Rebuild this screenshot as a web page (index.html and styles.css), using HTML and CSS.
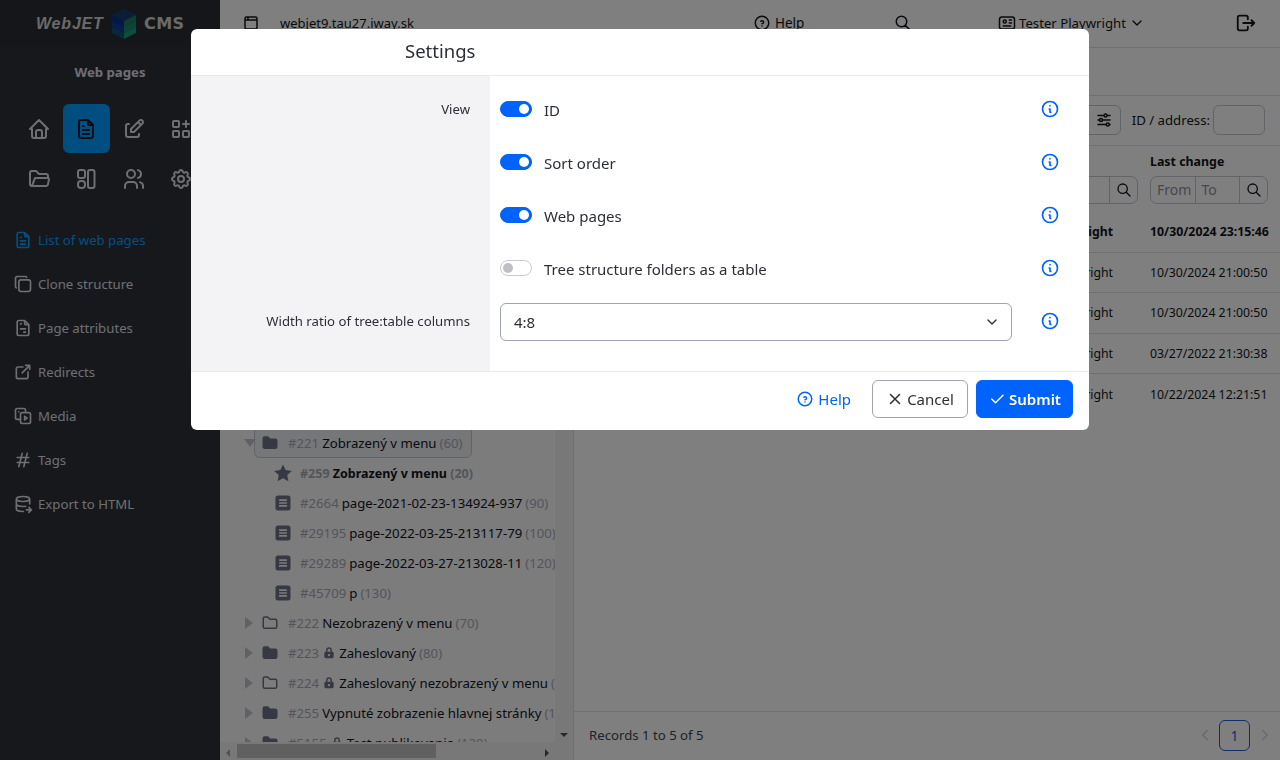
FILE: index.html
```html
<!DOCTYPE html>
<html lang="en">
<head>
<meta charset="utf-8">
<title>WebJET CMS - Web pages</title>
<link rel="stylesheet" href="styles.css">
</head>
<body>
<svg class="defs" xmlns="http://www.w3.org/2000/svg">
<symbol id="i-home" viewBox="0 0 24 24"><path d="M5 12H3l9-9 9 9h-2M5 12v7a2 2 0 0 0 2 2h10a2 2 0 0 0 2-2v-7M9 21v-6a2 2 0 0 1 2-2h2a2 2 0 0 1 2 2v6"/></symbol>
<symbol id="i-file" viewBox="0 0 24 24"><path d="M14 3v4a1 1 0 0 0 1 1h4M17 21H7a2 2 0 0 1-2-2V5a2 2 0 0 1 2-2h7l5 5v11a2 2 0 0 1-2 2zM9 9h1M9 13h6M9 17h6"/></symbol>
<symbol id="i-edit" viewBox="0 0 24 24"><path d="M7 7H6a2 2 0 0 0-2 2v9a2 2 0 0 0 2 2h9a2 2 0 0 0 2-2v-1M20.385 6.585a2.1 2.1 0 0 0-2.97-2.97L9 12v3h3l8.385-8.415zM16 5l3 3"/></symbol>
<symbol id="i-apps" viewBox="0 0 24 24"><path d="M5 4h4a1 1 0 0 1 1 1v4a1 1 0 0 1-1 1H5a1 1 0 0 1-1-1V5a1 1 0 0 1 1-1zM5 14h4a1 1 0 0 1 1 1v4a1 1 0 0 1-1 1H5a1 1 0 0 1-1-1v-4a1 1 0 0 1 1-1zM15 14h4a1 1 0 0 1 1 1v4a1 1 0 0 1-1 1h-4a1 1 0 0 1-1-1v-4a1 1 0 0 1 1-1zM14 7h6M17 4v6"/></symbol>
<symbol id="i-folder-open" viewBox="0 0 24 24"><path d="M5 19l2.757-7.351A1 1 0 0 1 8.693 11H21a1 1 0 0 1 .986 1.164l-.996 5.211A2 2 0 0 1 19.026 19H5a2 2 0 0 1-2-2V6a2 2 0 0 1 2-2h4l3 3h7a2 2 0 0 1 2 2v2"/></symbol>
<symbol id="i-layout" viewBox="0 0 24 24"><rect x="4" y="3" width="7" height="8" rx="2"/><rect x="4" y="14" width="7" height="7" rx="3"/><rect x="14" y="3" width="6.500" height="18" rx="2"/></symbol>
<symbol id="i-users" viewBox="0 0 24 24"><path d="M5 7a4 4 0 1 0 8 0 4 4 0 1 0-8 0M3 21v-2a4 4 0 0 1 4-4h4a4 4 0 0 1 4 4v2M16 3.130a4 4 0 0 1 0 7.750M21 21v-2a4 4 0 0 0-3-3.850"/></symbol>
<symbol id="i-gear" viewBox="0 0 24 24"><path d="M10.325 4.317c.426-1.756 2.924-1.756 3.350 0a1.724 1.724 0 0 0 2.573 1.066c1.543-.94 3.310.826 2.370 2.370a1.724 1.724 0 0 0 1.065 2.572c1.756.426 1.756 2.924 0 3.350a1.724 1.724 0 0 0-1.066 2.573c.94 1.543-.826 3.310-2.370 2.370a1.724 1.724 0 0 0-2.572 1.065c-.426 1.756-2.924 1.756-3.350 0a1.724 1.724 0 0 0-2.573-1.066c-1.543.94-3.310-.826-2.370-2.370a1.724 1.724 0 0 0-1.065-2.572c-1.756-.426-1.756-2.924 0-3.350a1.724 1.724 0 0 0 1.066-2.573c-.94-1.543.826-3.310 2.370-2.370 1 .608 2.296.07 2.572-1.065zM9 12a3 3 0 1 0 6 0 3 3 0 0 0-6 0"/></symbol>
<symbol id="i-copy" viewBox="0 0 24 24"><path d="M9.667 7h8.666A2.667 2.667 0 0 1 21 9.667v8.666A2.667 2.667 0 0 1 18.333 21H9.667A2.667 2.667 0 0 1 7 18.333V9.667A2.667 2.667 0 0 1 9.667 7zM4.012 16.737A2.005 2.005 0 0 1 3 15V5c0-1.100.9-2 2-2h10c.75 0 1.158.385 1.500 1"/></symbol>
<symbol id="i-attr" viewBox="0 0 24 24"><path d="M14 3v4a1 1 0 0 0 1 1h4M17 21H7a2 2 0 0 1-2-2V5a2 2 0 0 1 2-2h7l5 5v11a2 2 0 0 1-2 2zM9 7h1M9 13h6M13 17h2"/></symbol>
<symbol id="i-ext" viewBox="0 0 24 24"><path d="M12 6H6a2 2 0 0 0-2 2v10a2 2 0 0 0 2 2h10a2 2 0 0 0 2-2v-6M11 13l9-9M15 4h5v5"/></symbol>
<symbol id="i-media" viewBox="0 0 24 24"><path d="M11 8h8a2 2 0 0 1 2 2v9a2 2 0 0 1-2 2h-8a2 2 0 0 1-2-2v-9a2 2 0 0 1 2-2zM9 16H5a2 2 0 0 1-2-2V5a2 2 0 0 1 2-2h8a2 2 0 0 1 2 2v3M7 7h.01M14 12.500l3 2-3 2z"/></symbol>
<symbol id="i-hash" viewBox="0 0 24 24"><path d="M5 9h14M5 15h14M11 4L7 20M17 4l-4 16"/></symbol>
<symbol id="i-db" viewBox="0 0 24 24"><path d="M4 6c0 1.657 3.582 3 8 3s8-1.343 8-3-3.582-3-8-3-8 1.343-8 3M4 6v6c0 1.657 3.582 3 8 3 1.118 0 2.183-.086 3.150-.241M20 12V6M4 12v6c0 1.657 3.582 3 8 3 .157 0 .312-.002.466-.005M16 19h6M19 16l3 3-3 3"/></symbol>
<symbol id="i-info" viewBox="0 0 24 24"><path d="M3 12a9 9 0 1 0 18 0 9 9 0 1 0-18 0M12 8h.01M11 12h1v4h1"/></symbol>
<symbol id="i-help" viewBox="0 0 24 24"><path d="M3 12a9 9 0 1 0 18 0 9 9 0 1 0-18 0M12 16v.01M12 13a2 2 0 0 0 .914-3.782 1.980 1.980 0 0 0-2.414.483"/></symbol>
<symbol id="i-search" viewBox="0 0 24 24"><path d="M3 10a7 7 0 1 0 14 0 7 7 0 1 0-14 0M21 21l-6-6"/></symbol>
<symbol id="i-id" viewBox="0 0 24 24"><path d="M5 4h14a3 3 0 0 1 3 3v10a3 3 0 0 1-3 3H5a3 3 0 0 1-3-3V7a3 3 0 0 1 3-3zM7 10a2 2 0 1 0 4 0 2 2 0 1 0-4 0M15 8h3M15 12h3M7 16h10"/></symbol>
<symbol id="i-logout" viewBox="0 0 24 24"><path d="M14 8V6a2 2 0 0 0-2-2H5a2 2 0 0 0-2 2v12a2 2 0 0 0 2 2h7a2 2 0 0 0 2-2v-2M9 12h12l-3-3M18 15l3-3"/></symbol>
<symbol id="i-window" viewBox="0 0 24 24"><path d="M6 4h12a2 2 0 0 1 2 2v12a2 2 0 0 1-2 2H6a2 2 0 0 1-2-2V6a2 2 0 0 1 2-2zM4 8h16M8 4v4"/></symbol>
<symbol id="i-sliders" viewBox="0 0 24 24"><path d="M12 6a2 2 0 1 0 4 0 2 2 0 1 0-4 0M4 6h8M16 6h4M6 12a2 2 0 1 0 4 0 2 2 0 1 0-4 0M4 12h2M10 12h10M15 18a2 2 0 1 0 4 0 2 2 0 1 0-4 0M4 18h11M19 18h1"/></symbol>
<symbol id="i-check" viewBox="0 0 24 24"><path d="M5 12l5 5L20 7"/></symbol>
<symbol id="i-x" viewBox="0 0 24 24"><path d="M18 6L6 18M6 6l12 12"/></symbol>
<symbol id="i-chev" viewBox="0 0 24 24"><path d="M6 9l6 6 6-6"/></symbol>
<symbol id="i-left" viewBox="0 0 24 24"><path d="M15 6l-6 6 6 6"/></symbol>
<symbol id="i-right" viewBox="0 0 24 24"><path d="M9 6l6 6-6 6"/></symbol>
<symbol id="f-folder" viewBox="0 0 24 24"><path class="fill" d="M9 3a1 1 0 0 1 .608.206l.1.087L12.414 6H19a3 3 0 0 1 3 3v8a3 3 0 0 1-3 3H5a3 3 0 0 1-3-3V6a3 3 0 0 1 3-3z"/></symbol>
<symbol id="o-folder" viewBox="0 0 24 24"><path d="M5 4h4l3 3h7a2 2 0 0 1 2 2v8a2 2 0 0 1-2 2H5a2 2 0 0 1-2-2V6a2 2 0 0 1 2-2"/></symbol>
<symbol id="f-star" viewBox="0 0 24 24"><path class="fill" d="M12 1.800l3.150 6.700 7.350.95-5.400 5.050 1.400 7.300L12 18.200l-6.500 3.600 1.400-7.300L1.500 9.450l7.350-.95z"/></symbol>
<symbol id="f-page" viewBox="0 0 24 24"><path class="fill" fill-rule="evenodd" d="M6 3h12a3 3 0 0 1 3 3v12a3 3 0 0 1-3 3H6a3 3 0 0 1-3-3V6a3 3 0 0 1 3-3zM8 7.500a1 1 0 0 0 0 2h8a1 1 0 0 0 0-2zM8 11a1 1 0 0 0 0 2h8a1 1 0 0 0 0-2zM8 14.500a1 1 0 0 0 0 2h8a1 1 0 0 0 0-2z"/></symbol>
<symbol id="f-lock" viewBox="0 0 24 24"><path class="fill" fill-rule="evenodd" d="M12 2a5 5 0 0 1 5 5v3h.5a2.500 2.500 0 0 1 2.500 2.500v6a2.500 2.500 0 0 1-2.500 2.500h-11A2.500 2.500 0 0 1 4 18.500v-6A2.500 2.500 0 0 1 6.500 10H7V7a5 5 0 0 1 5-5zm0 2.500A2.500 2.500 0 0 0 9.500 7v3h5V7A2.500 2.500 0 0 0 12 4.500zM12 13.500a2 2 0 1 0 0 4 2 2 0 0 0 0-4z"/></symbol>
</svg>

<div class="app">
  <aside class="sidebar">
    <div class="logo">
      <span class="logo-web">WebJET</span>
      <svg class="logo-mark" viewBox="0 0 24 30"><polygon points="12,0 24,6 12,12 0,6" fill="#123f6e"/><polygon points="0,6 12,12 12,18 0,12" fill="#0a2f8f"/><polygon points="24,6 12,12 12,18 24,12" fill="#1a7f6a"/><polygon points="0,12 12,18 12,24 0,18" fill="#0b3f94"/><polygon points="24,12 12,18 12,24 24,18" fill="#178a68"/><polygon points="0,18 12,24 12,30 0,24" fill="#10507c"/><polygon points="24,18 12,24 12,30 24,24" fill="#1c9a6e"/></svg>
      <span class="logo-cms">CMS</span>
    </div>
    <div class="section-title">Web pages</div>
    <div class="module-grid">
      <a class="module"><svg class="ic24"><use href="#i-home"/></svg></a>
      <a class="module module-active"><svg class="ic24"><use href="#i-file"/></svg></a>
      <a class="module"><svg class="ic24"><use href="#i-edit"/></svg></a>
      <a class="module"><svg class="ic24"><use href="#i-apps"/></svg></a>
      <a class="module"><svg class="ic24"><use href="#i-folder-open"/></svg></a>
      <a class="module"><svg class="ic24"><use href="#i-layout"/></svg></a>
      <a class="module"><svg class="ic24"><use href="#i-users"/></svg></a>
      <a class="module"><svg class="ic24"><use href="#i-gear"/></svg></a>
    </div>
    <nav class="side-nav">
      <a class="nav-item nav-active"><svg class="ic20"><use href="#i-file"/></svg>List of web pages</a>
      <a class="nav-item"><svg class="ic20"><use href="#i-copy"/></svg>Clone structure</a>
      <a class="nav-item"><svg class="ic20"><use href="#i-attr"/></svg>Page attributes</a>
      <a class="nav-item"><svg class="ic20"><use href="#i-ext"/></svg>Redirects</a>
      <a class="nav-item"><svg class="ic20"><use href="#i-media"/></svg>Media</a>
      <a class="nav-item"><svg class="ic20"><use href="#i-hash"/></svg>Tags</a>
      <a class="nav-item"><svg class="ic20"><use href="#i-db"/></svg>Export to HTML</a>
    </nav>
  </aside>

  <div class="main">
    <header class="topbar">
      <svg class="ic18 domain-ic"><use href="#i-window"/></svg>
      <span class="domain">webjet9.tau27.iway.sk</span>
      <span class="top-help"><svg class="ic18"><use href="#i-help"/></svg>Help</span>
      <svg class="ic18 top-search"><use href="#i-search"/></svg>
      <span class="top-user"><svg class="ic18"><use href="#i-id"/></svg>Tester Playwright<svg class="ic16"><use href="#i-chev"/></svg></span>
      <svg class="ic22 top-logout"><use href="#i-logout"/></svg>
    </header>
    <div class="tabsbar"></div>
    <div class="workspace">
      <section class="tree">
        <div class="tree-scroll">
          <div class="tree-row tree-sel"><span class="caret caret-down"></span><svg class="ic18"><use href="#f-folder"/></svg><span class="tid">#221</span> Zobrazený v menu <span class="tnum">(60)</span></div>
          <div class="tree-row leaf"><svg class="ic20"><use href="#f-star"/></svg><strong><span class="tid">#259</span> Zobrazený v menu <span class="tnum">(20)</span></strong></div>
          <div class="tree-row leaf"><svg class="ic20"><use href="#f-page"/></svg><span class="tid">#2664</span> page-2021-02-23-134924-937 <span class="tnum">(90)</span></div>
          <div class="tree-row leaf"><svg class="ic20"><use href="#f-page"/></svg><span class="tid">#29195</span> page-2022-03-25-213117-79 <span class="tnum">(100)</span></div>
          <div class="tree-row leaf"><svg class="ic20"><use href="#f-page"/></svg><span class="tid">#29289</span> page-2022-03-27-213028-11 <span class="tnum">(120)</span></div>
          <div class="tree-row leaf"><svg class="ic20"><use href="#f-page"/></svg><span class="tid">#45709</span> p <span class="tnum">(130)</span></div>
          <div class="tree-row"><span class="caret"></span><svg class="ic18"><use href="#o-folder"/></svg><span class="tid">#222</span> Nezobrazený v menu <span class="tnum">(70)</span></div>
          <div class="tree-row"><span class="caret"></span><svg class="ic18"><use href="#f-folder"/></svg><span class="tid">#223</span> <svg class="ic14 lock"><use href="#f-lock"/></svg> Zaheslovaný <span class="tnum">(80)</span></div>
          <div class="tree-row"><span class="caret"></span><svg class="ic18"><use href="#o-folder"/></svg><span class="tid">#224</span> <svg class="ic14 lock"><use href="#f-lock"/></svg> Zaheslovaný nezobrazený v menu <span class="tnum">(110)</span></div>
          <div class="tree-row"><span class="caret"></span><svg class="ic18"><use href="#f-folder"/></svg><span class="tid">#255</span> Vypnuté zobrazenie hlavnej stránky <span class="tnum">(100)</span></div>
          <div class="tree-row"><span class="caret"></span><svg class="ic18"><use href="#f-folder"/></svg><span class="tid">#5155</span> <svg class="ic14 lock"><use href="#f-lock"/></svg> Test publikovania <span class="tnum">(120)</span></div>
        </div>
        <div class="sb-v"><span class="sb-down"></span></div>
        <div class="sb-h"><span class="sb-left"></span><span class="sb-thumb"></span><span class="sb-right"></span></div>
      </section>
      <section class="datatable">
        <div class="dt-toolbar">
          <button class="tool-btn"><svg class="ic18"><use href="#i-sliders"/></svg></button>
          <label class="id-label">ID / address:</label>
          <span class="id-input"></span>
        </div>
        <div class="dt-grid">
          <div class="dt-head">
            <div class="col-a"><b>Changed by</b><div class="filter filter-a"><span class="f-cell f-grow"></span><span class="f-btn"><svg class="ic16"><use href="#i-search"/></svg></span></div></div>
            <div class="col-b"><b>Last change</b><div class="filter"><span class="f-cell">From</span><span class="f-cell">To</span><span class="f-btn"><svg class="ic16"><use href="#i-search"/></svg></span></div></div>
          </div>
          <div class="dt-row dt-row-bold"><span class="col-a">Tester Playwright</span><span class="col-b">10/30/2024 23:15:46</span></div>
          <div class="dt-row"><span class="col-a">Tester Playwright</span><span class="col-b">10/30/2024 21:00:50</span></div>
          <div class="dt-row"><span class="col-a">Tester Playwright</span><span class="col-b">10/30/2024 21:00:50</span></div>
          <div class="dt-row"><span class="col-a">Tester Playwright</span><span class="col-b">03/27/2022 21:30:38</span></div>
          <div class="dt-row dt-row-last"><span class="col-a">Tester Playwright</span><span class="col-b">10/22/2024 12:21:51</span></div>
        </div>
        <footer class="dt-footer">
          <span class="records">Records 1 to 5 of 5</span>
          <div class="pager"><svg class="ic18 pg-arrow"><use href="#i-left"/></svg><span class="pg-num">1</span><svg class="ic18 pg-arrow"><use href="#i-right"/></svg></div>
        </footer>
      </section>
    </div>
  </div>
</div>

<div class="backdrop"></div>
<div class="modal">
  <div class="modal-head">Settings</div>
  <div class="modal-body">
    <div class="form-row">
      <div class="form-label">View</div>
      <div class="form-field"><span class="switch on"></span><span>ID</span></div>
      <svg class="ic20 info"><use href="#i-info"/></svg>
    </div>
    <div class="form-row">
      <div class="form-label"></div>
      <div class="form-field"><span class="switch on"></span><span>Sort order</span></div>
      <svg class="ic20 info"><use href="#i-info"/></svg>
    </div>
    <div class="form-row">
      <div class="form-label"></div>
      <div class="form-field"><span class="switch on"></span><span>Web pages</span></div>
      <svg class="ic20 info"><use href="#i-info"/></svg>
    </div>
    <div class="form-row">
      <div class="form-label"></div>
      <div class="form-field"><span class="switch"></span><span>Tree structure folders as a table</span></div>
      <svg class="ic20 info"><use href="#i-info"/></svg>
    </div>
    <div class="form-row">
      <div class="form-label">Width ratio of tree:table columns</div>
      <div class="form-field"><div class="select"><span>4:8</span><svg class="ic16"><use href="#i-chev"/></svg></div></div>
      <svg class="ic20 info"><use href="#i-info"/></svg>
    </div>
  </div>
  <div class="modal-foot">
    <a class="help-link"><svg class="ic18"><use href="#i-help"/></svg>Help</a>
    <button class="btn btn-cancel"><svg class="ic18"><use href="#i-x"/></svg>Cancel</button>
    <button class="btn btn-submit"><svg class="ic18"><use href="#i-check"/></svg>Submit</button>
  </div>
</div>
</body>
</html>
```

FILE: styles.css
```css
* { box-sizing: border-box; }
html, body { margin: 0; height: 100%; overflow: hidden; }
body { font-family: "Noto Sans", "Open Sans", sans-serif; font-size: 13.2px; color: #13151b; background: #fff; }
.defs { display: none; }
svg { fill: none; stroke: currentColor; stroke-width: 2; stroke-linecap: round; stroke-linejoin: round; flex: none; }
.fill { fill: currentColor; stroke: none; }
.ic14 { width: 14px; height: 14px; }
.ic16 { width: 16px; height: 16px; }
.ic18 { width: 18px; height: 18px; }
.ic20 { width: 20px; height: 20px; }
.ic22 { width: 22px; height: 22px; }
.ic24 { width: 24px; height: 24px; }

.app { display: flex; height: 760px; }

/* sidebar */
.sidebar { width: 220px; flex: none; background: #2f3139; color: #dcdee6; overflow: hidden; }
.logo { height: 47px; background: #2b2d35; display: flex; align-items: center; padding-left: 36px; }
.logo-web { font: italic 700 16px "Liberation Sans", sans-serif; letter-spacing: .8px; width: 76px; color: #d4d4d4; }
.logo-mark { width: 24px; height: 30px; stroke: none; }
.logo-cms { font: 700 16px "DejaVu Sans", sans-serif; letter-spacing: .4px; margin-left: 8px; color: #d4d4d4; }
.section-title { text-align: center; font-weight: 700; padding-top: 16px; height: 57px; }
.module-grid { display: grid; grid-template-columns: repeat(4, 47.5px); grid-auto-rows: 49px; row-gap: 1px; padding-left: 15px; width: 230px; }
.module { display: flex; align-items: center; justify-content: center; border-radius: 6px; }
.module-active { background: #009bff; color: #0a1c2e; }
.side-nav { margin-top: 15px; display: flex; flex-direction: column; }
.nav-item { display: flex; align-items: center; gap: 5px; height: 44px; padding-left: 13px; }
.nav-active { color: #0a9eff; }

/* main */
.main { flex: 1; min-width: 0; display: flex; flex-direction: column; }
.topbar { height: 48px; flex: none; display: flex; align-items: center; padding: 0 0 1px 22px; border-bottom: 1px solid #dfe1e6; font-size: 13.2px; }
.domain { margin-left: 20px; width: 473px; font-size: 13px; }
.top-help { display: flex; align-items: center; gap: 4px; width: 140.500px; font-size: 13.500px; }
.top-search { margin-right: 86.500px; }
.top-user { display: flex; align-items: center; gap: 3px; width: 237px; }
.workspace { flex: 1; display: flex; min-height: 0; }
.tabsbar { height: 48px; flex: none; border-bottom: 1px solid #dfe1e6; }

/* tree */
.tree { width: 354px; flex: none; position: relative; overflow: hidden; background: #f8f8fa; border-right: 1px solid #dfe1e6; }
.tree-scroll { padding: 332px 0 0 24px; width: 335px; white-space: nowrap; overflow: hidden; }
.tree-row { height: 30px; display: flex; align-items: center; gap: 3px; position: relative; padding-left: 17px; isolation: isolate; }
.tree-row .ic18 { margin-right: 6px; color: #6c7189; }
.tree-row .tid, .tree-row .tnum { color: #a8aab4; }
.tree-row strong { font-size: 12.500px; }
.tree-sel::before { content: ""; position: absolute; left: 10px; top: -2px; width: 216px; height: 30px; border: 1px solid #c4c6d0; border-radius: 6px; background: #eceef2; z-index: -1; }
.leaf { padding-left: 29px; }
.leaf .ic20 { color: #6c7189; margin-right: 4px; }
.lock { color: #6c7189; }
.caret { position: absolute; left: 1px; top: 9px; width: 0; height: 0; border-left: 8px solid #c0c2cc; border-top: 6px solid transparent; border-bottom: 6px solid transparent; }
.caret-down { left: 0; top: 11px; border-left: 6px solid transparent; border-right: 6px solid transparent; border-top: 8px solid #c0c2cc; border-bottom: 0; }
.sb-v { position: absolute; right: 0; top: 0; bottom: 18px; width: 18px; background: #f1f1f1; }
.sb-down { position: absolute; left: 5px; bottom: 5px; border-left: 4px solid transparent; border-right: 4px solid transparent; border-top: 4px solid #505050; }
.sb-h { position: absolute; left: 0; right: 0; bottom: 0; height: 18px; background: #f1f1f1; }
.sb-left { position: absolute; left: 6px; top: 7px; border-top: 4px solid transparent; border-bottom: 4px solid transparent; border-right: 4px solid #a3a3a3; }
.sb-thumb { position: absolute; left: 17px; top: 2px; width: 199px; height: 14px; background: #c1c1c1; }
.sb-right { position: absolute; left: 325px; top: 7px; border-top: 4px solid transparent; border-bottom: 4px solid transparent; border-left: 4px solid #505050; }

/* table */
.datatable { flex: 1; min-width: 0; display: flex; flex-direction: column; }
.dt-toolbar { height: 49px; flex: none; display: flex; align-items: center; justify-content: flex-end; padding: 0 15px 2px 0; }
.tool-btn { width: 34px; height: 30px; padding: 0; background: transparent; border: 1px solid #c4c6d0; border-radius: 0 6px 6px 0; display: flex; align-items: center; justify-content: center; color: #13151b; margin-right: 11px; }
.id-label { margin-right: 3px; }
.id-input { width: 52px; height: 30px; border: 1px solid #c4c6d0; border-radius: 6px; }
.dt-grid { flex: 1; border-top: 1px solid #dfe1e6; }
.dt-head { display: flex; justify-content: flex-end; height: 66px; padding: 7px 12px 0 0; }
.col-a { width: 140px; }
.col-b { width: 118px; margin-left: 12px; flex: none; }
.dt-head b { display: block; height: 23px; line-height: 18px; font-size: 12.4px; white-space: nowrap; }
.filter { display: flex; height: 28px; border: 1px solid #c4c6d0; border-radius: 7px; overflow: hidden; color: #8c8f9c; font-size: 14px; }
.f-cell { flex: 1; border-right: 1px solid #c4c6d0; padding-left: 6px; line-height: 26px; }
.f-btn { width: 27px; flex: none; display: flex; align-items: center; justify-content: center; color: #13151b; }
.dt-row { display: flex; justify-content: flex-end; height: 40.500px; align-items: center; border-bottom: 1px solid #dfe1e6; padding-right: 12px; font-size: 12.3px; white-space: nowrap; }
.dt-row .col-a { text-align: right; padding-right: 25px; }
.dt-row-bold { font-weight: 700; }
.dt-row-last { border-bottom: 0; }
.dt-footer { height: 49px; flex: none; border-top: 1px solid #dfe1e6; display: flex; align-items: center; justify-content: space-between; padding: 0 6px 2px 15px; }
.records { color: #43454f; }
.pager { display: flex; align-items: center; gap: 5px; color: #d4d5dc; }
.pg-num { width: 31px; height: 31px; border: 1px solid #1a5fd9; border-radius: 6px; color: #1a5fd9; display: flex; align-items: center; justify-content: center; font-size: 14px; margin-right: 1px; }

/* modal */
.backdrop { position: fixed; inset: 0; z-index: 10; background: rgba(0,0,0,.5); }
.modal { position: fixed; left: 191px; top: 29px; z-index: 11; width: 898px; height: 401px; background: #fff; border-radius: 6px; display: flex; flex-direction: column; color: #2d2f38; overflow: hidden; }
.modal-head { height: 47px; flex: none; border-bottom: 1px solid #e9eaee; font-size: 18.500px; line-height: 43px; padding-left: 214px; }
.modal-body { height: 295px; flex: none; padding-top: 7px; background: linear-gradient(90deg, #f3f3f6 299px, #fff 299px); }
.form-row { display: flex; align-items: center; height: 53px; }
.form-label { width: 299px; padding: 0 20px 2px 0; text-align: right; flex: none; }
.form-field { width: 512px; margin-left: 10px; flex: none; display: flex; align-items: center; gap: 12px; font-size: 15px; }
.info { color: #0063fb; margin: 0 0 2px 28px; }
.switch { width: 32px; height: 16px; border-radius: 8px; border: 1px solid #c9cacf; background: #fff; position: relative; flex: none; margin-bottom: 2px; }
.switch::after { content: ""; position: absolute; left: 2px; top: 2px; width: 10px; height: 10px; border-radius: 50%; background: #bfc0c4; }
.switch.on { background: #0063fb; border-color: #0063fb; }
.switch.on::after { left: auto; right: 2px; background: #fff; }
.select { width: 100%; height: 38px; border: 1px solid #a0a4b0; border-radius: 6px; display: flex; align-items: center; justify-content: space-between; padding: 0 11px 0 13px; }
.modal-foot { flex: 1; border-top: 1px solid #e9eaee; display: flex; align-items: flex-start; justify-content: flex-end; gap: 8px; padding: 8px 16px 0 0; }
.help-link { display: flex; align-items: center; gap: 4px; color: #0063fb; font-size: 15px; line-height: 38px; margin-right: 13px; }
.btn { height: 38px; border-radius: 6px; font: inherit; font-size: 15px; display: flex; align-items: center; justify-content: center; gap: 3px; padding: 0; }
.btn-cancel { width: 96px; background: #fff; border: 1px solid #a0a4b0; color: #2d2f38; }
.btn-submit { width: 97px; background: #0063fb; border: 1px solid #0063fb; color: #fff; font-weight: 600; }
```
